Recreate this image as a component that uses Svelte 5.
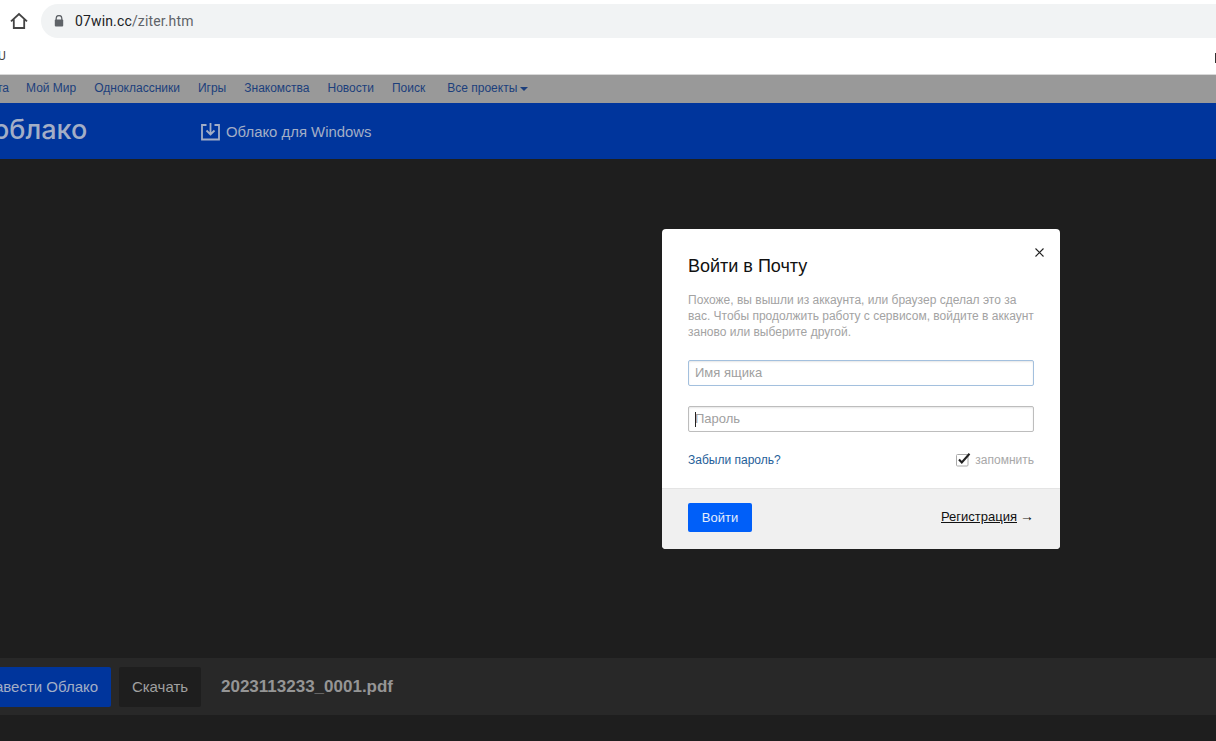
<script lang="ts">
	const links = ['Мой Мир', 'Одноклассники', 'Игры', 'Знакомства', 'Новости', 'Поиск'];
</script>

<div class="page">
	<header class="toolbar">
		<svg class="home" width="18" height="18" viewBox="0 0 18 18" fill="none" stroke="#444" stroke-width="1.8" stroke-linejoin="miter">
			<path d="M1 9.400 9 2l8 7.400M3.800 7.500V16h10.400V7.500" />
		</svg>
		<div class="url">
			<svg class="lock" width="10" height="12" viewBox="0 0 10 12">
				<path d="M2.200 5V3.300a2.800 2.800 0 0 1 5.600 0V5" fill="none" stroke="#5f6368" stroke-width="1.300" />
				<rect x="0.800" y="4.600" width="8.400" height="6.900" rx="1" fill="#5f6368" />
			</svg>
			<span class="host">07win.cc</span><span class="path">/ziter.htm</span>
		</div>
	</header>

	<div class="bookmarks">
		<span class="bm-u">U</span>
		<span class="bm-edge"></span>
	</div>

	<nav class="portal">
		<span class="cut">та</span>
		{#each links as link}
			<span class="plink">{link}</span>
		{/each}
		<span class="plink more">Все проекты<i class="caret"></i></span>
	</nav>

	<div class="brand">
		<span class="logo">облако</span>
		<div class="win">
			<svg width="19" height="19" viewBox="0 0 19 19" fill="none" stroke="#a3aec6" stroke-width="1.800">
				<path d="M5.500 3H1v14.500h17V3h-4.500" />
				<path d="M9.500 1v11M5.500 8.500l4 4 4-4" />
			</svg>
			<span>Облако для Windows</span>
		</div>
	</div>

	<main class="stage">
		<section class="modal">
			<div class="modal-body">
				<svg class="close" width="9" height="9" viewBox="0 0 9 9" stroke="#222" stroke-width="1.100">
					<path d="M.5.500l8 8M8.500.500l-8 8" />
				</svg>
				<h1>Войти в Почту</h1>
				<p>Похоже, вы вышли из аккаунта, или браузер сделал это за вас. Чтобы продолжить работу с сервисом, войдите в аккаунт заново или выберите другой.</p>
				<div class="field active">Имя ящика</div>
				<div class="field second"><i class="cursor"></i>Пароль</div>
				<div class="row">
					<span class="forgot">Забыли пароль?</span>
					<span class="remember">
						<svg width="15" height="15" viewBox="0 0 15 15" fill="none">
							<rect x="0.500" y="2.500" width="11.500" height="11.500" rx="1" stroke="#aaa" />
							<path d="M3 7.500l2.800 3L13.500 1.800" stroke="#222" stroke-width="2.100" />
						</svg>
						запомнить
					</span>
				</div>
			</div>
			<div class="modal-foot">
				<span class="submit">Войти</span>
				<span class="register"><u>Регистрация</u> <span class="arrow">→</span></span>
			</div>
		</section>
	</main>

	<div class="actionbar">
		<span class="btn primary">Завести Облако</span>
		<span class="btn dark">Скачать</span>
		<span class="filename">2023113233_0001.pdf</span>
	</div>
	<div class="rest"></div>
</div>

<style>
	:global(body) {
		margin: 0;
		overflow: hidden;
		background: #1e1e1e;
	}

	.page {
		width: 1216px;
		height: 741px;
		display: flex;
		flex-direction: column;
		overflow: hidden;
		font-family: 'Liberation Sans', Arial, sans-serif;
	}

	.toolbar {
		height: 44px;
		flex-shrink: 0;
		box-sizing: border-box;
		padding: 4px 0 6px 10px;
		background: #fff;
		display: flex;
		align-items: center;
		gap: 13px;
	}

	.home {
		flex-shrink: 0;
		margin-top: -1px;
	}

	.url {
		flex: 1;
		height: 34px;
		margin-right: -40px;
		border-radius: 17px;
		background: #f1f3f4;
		display: flex;
		align-items: center;
		padding-left: 13px;
		font-family: Roboto, 'Noto Sans', sans-serif;
		font-size: 14px;
		letter-spacing: 0.14px;
	}

	.lock {
		margin-right: 11px;
	}

	.host {
		color: #202124;
	}

	.path {
		color: #5f6368;
	}

	.bookmarks {
		height: 31px;
		flex-shrink: 0;
		box-sizing: border-box;
		padding-bottom: 6px;
		background: #fff;
		display: flex;
		align-items: center;
		justify-content: space-between;
		font-family: Roboto, sans-serif;
		font-size: 12px;
		color: #444;
		border-bottom: 1px solid #d8d8d8;
	}

	.bm-u {
		margin-left: -2px;
	}

	.bm-edge {
		width: 1px;
		height: 10px;
		margin-top: 3px;
		background: #333;
	}

	.portal {
		height: 28px;
		flex-shrink: 0;
		background: #999;
		display: flex;
		align-items: center;
		font-size: 12px;
		color: #1c3f7c;
		margin-left: -3px;
		padding-bottom: 2px;
		box-sizing: border-box;
	}

	.cut {
		width: 29px;
	}

	.plink {
		margin-right: 18px;
	}

	.more {
		margin-left: 4px;
		display: flex;
		align-items: center;
	}

	.caret {
		margin: 2px 0 0 3px;
		border: 4px solid transparent;
		border-top-color: #1c3f7c;
		border-bottom: 0;
	}

	.brand {
		height: 56px;
		flex-shrink: 0;
		background: #00359c;
		display: flex;
		align-items: center;
		color: #a3aec6;
	}

	.logo {
		width: 201px;
		box-sizing: border-box;
		margin-left: -7px;
		margin-right: 7px;
		font-family: Inter, 'Noto Sans', sans-serif;
		font-weight: 500;
		font-size: 27px;
		margin-top: -3px;
	}

	.win {
		display: flex;
		align-items: center;
		gap: 6px;
		font-size: 14.900px;
	}

	.win span {
		margin-top: 2px;
	}

	.stage {
		flex: 1;
		position: relative;
		background: #1e1e1e;
	}

	.modal {
		position: absolute;
		left: 662px;
		top: 70px;
		width: 398px;
		height: 320px;
		border-radius: 4px;
		overflow: hidden;
		background: #fff;
		display: flex;
		flex-direction: column;
	}

	.modal-body {
		flex: 1;
		position: relative;
		padding: 26px 26px 0;
	}

	.close {
		position: absolute;
		top: 19px;
		right: 16px;
	}

	h1 {
		margin: 0 0 15px;
		font-weight: 400;
		font-size: 18px;
		line-height: 22px;
		color: #111;
	}

	p {
		margin: 0 0 20px;
		font-size: 12px;
		line-height: 16px;
		color: #a3a3a3;
	}

	.field {
		height: 26px;
		box-sizing: border-box;
		border: 1px solid #bdbdbd;
		border-radius: 2px;
		padding-left: 6px;
		font-size: 13px;
		line-height: 24px;
		color: #a0a0a0;
		box-shadow: inset 0 1px 2px rgba(0, 0, 0, 0.1);
		position: relative;
	}

	.active {
		border-color: #a3c0de;
	}

	.second {
		margin-top: 20px;
	}

	.cursor {
		position: absolute;
		left: 6px;
		top: 5px;
		width: 1px;
		height: 15px;
		background: #222;
	}

	.row {
		margin-top: 20px;
		display: flex;
		justify-content: space-between;
		align-items: center;
		font-size: 12px;
	}

	.forgot {
		color: #1f6099;
	}

	.remember {
		display: flex;
		align-items: center;
		gap: 4px;
		color: #a8a8a8;
		font-size: 12px;
	}

	.modal-foot {
		height: 61px;
		flex-shrink: 0;
		box-sizing: border-box;
		border-top: 1px solid #e4e4e4;
		background: #f0f0f0;
		padding: 14px 26px 0;
		display: flex;
		justify-content: space-between;
		align-items: flex-start;
	}

	.submit {
		width: 64px;
		height: 29px;
		border-radius: 2px;
		background: #005ff9;
		color: #e6eefc;
		font-size: 13px;
		line-height: 29px;
		text-align: center;
	}

	.register {
		margin-top: 6px;
		font-size: 13px;
		color: #111;
		display: flex;
		align-items: center;
		gap: 3px;
	}

	.arrow {
		font-size: 14px;
		line-height: 14px;
		margin-top: -1px;
	}

	.actionbar {
		height: 57px;
		flex-shrink: 0;
		background: #282828;
		display: flex;
		align-items: center;
		margin-left: -23px;
	}

	.btn {
		height: 40px;
		line-height: 40px;
		border-radius: 2px;
		font-size: 15px;
		text-align: center;
		box-sizing: border-box;
	}

	.primary {
		width: 134px;
		padding-right: 4px;
		background: #00359c;
		color: #a3aec6;
		margin-right: 8px;
	}

	.dark {
		width: 82px;
		background: #1e1e1e;
		color: #a0a0a0;
		margin-right: 20px;
	}

	.filename {
		font-size: 17px;
		font-weight: 700;
		color: #959595;
	}

	.rest {
		height: 26px;
		flex-shrink: 0;
		background: #1e1e1e;
	}
</style>
